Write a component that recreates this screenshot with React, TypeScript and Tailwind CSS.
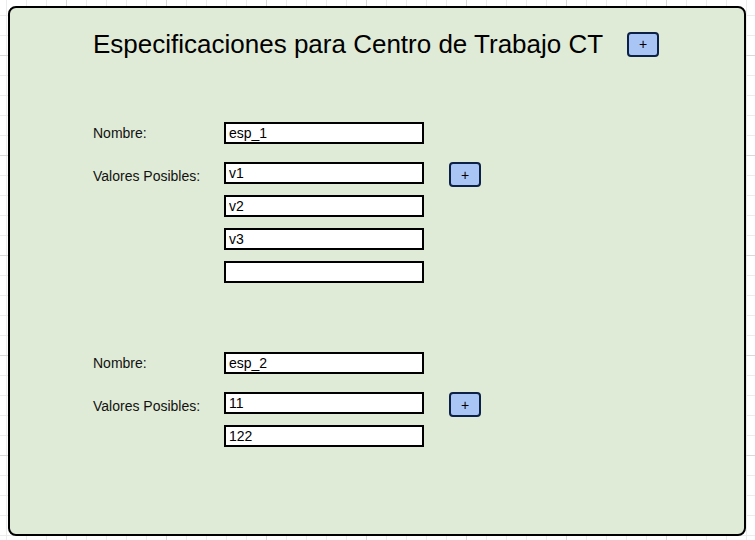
import React from 'react';

type Spec = { name: string; values: string[] };

const specs: Spec[] = [
  { name: 'esp_1', values: ['v1', 'v2', 'v3', ''] },
  { name: 'esp_2', values: ['11', '122'] },
];

function PlusButton({ className = '' }: { className?: string }) {
  return (
    <button
      type="button"
      className={`flex h-[25px] w-[32px] shrink-0 items-center justify-center rounded-[4px] border-2 border-[#0c2147] bg-[#a9c5f5] text-[14px] leading-none text-black ${className}`}
    >
      +
    </button>
  );
}

function Field({ value }: { value: string }) {
  return (
    <input
      readOnly
      defaultValue={value}
      className="block h-[22px] w-[200px] border-2 border-black bg-white px-[3px] text-[14px] leading-[16px] text-black outline-none"
    />
  );
}

function SpecBlock({ spec }: { spec: Spec }) {
  return (
    <div className="flex flex-col gap-[18px]">
      <div className="flex items-center">
        <span className="w-[131px] text-[14px] leading-[16px] text-[#111]">Nombre:</span>
        <Field value={spec.name} />
      </div>
      <div className="flex items-start">
        <span className="w-[131px] pt-[6px] text-[14px] leading-[16px] text-[#111]">Valores Posibles:</span>
        <div className="flex w-[200px] flex-col gap-[11px]">
          {spec.values.map((v, i) => (
            <Field key={i} value={v} />
          ))}
        </div>
        <PlusButton className="ml-[25px]" />
      </div>
    </div>
  );
}

export default function App() {
  return (
    <div
      className="h-[540px] w-full overflow-hidden bg-white bg-[linear-gradient(to_right,#d9d9d9_1px,transparent_1px),linear-gradient(to_bottom,#d9d9d9_1px,transparent_1px),linear-gradient(to_right,#ececec_1px,transparent_1px),linear-gradient(to_bottom,#ececec_1px,transparent_1px)] bg-[size:100px_100px,100px_100px,20px_20px,20px_20px] bg-[position:66px_0,0_55px,6px_0,0_15px] pl-[8px] pt-[6px] font-['Liberation_Sans',Arial,sans-serif]"
    >
      <div className="h-[530px] w-[738px] rounded-[8px] border-2 border-black bg-[#dfebd6] pl-[83px] pt-[21px]">
        <div className="flex h-[30px] items-center gap-[24px]">
          <h1 className="text-[26px] leading-[30px] text-black">Especificaciones para Centro de Trabajo CT</h1>
          <PlusButton />
        </div>
        <div className="mt-[63px] flex flex-col gap-[69px]">
          {specs.map((s) => (
            <SpecBlock key={s.name} spec={s} />
          ))}
        </div>
      </div>
    </div>
  );
}
